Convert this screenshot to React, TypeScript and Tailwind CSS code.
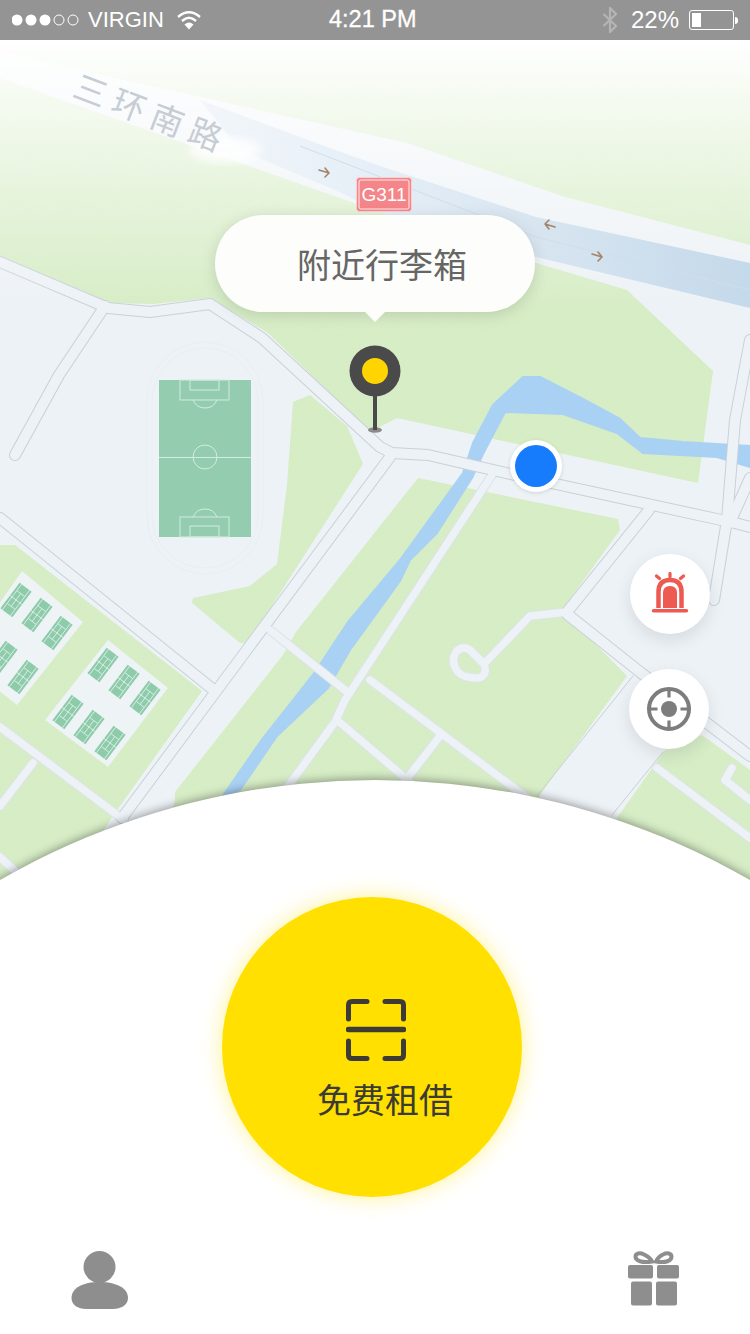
import React from "react";

const edgedRoads = [
  "0,262 108,308 150,312 210,304 262,338 380,447 392,453 428,455 510,474 735,523 750,527",
  "105,306 59,375 15,455",
  "390,457 122,818",
  "0,518 215,691",
  "649,510 567,612",
  "567,614 640,672 750,756",
  "750,340 735,420 727,520 714,600",
  "732,518 750,478",
];
const plainRoads = [
  "492,475 345,700 335,722 278,800",
  "270,630 346,691",
  "370,680 530,800",
  "337,720 410,782",
  "440,736 402,785",
  "0,727 124,820",
  "33,763 0,806",
  "0,857 30,885",
  "657,768 750,838",
  "732,768 725,780 750,800",
];
const courts = [
  [103, 665], [124, 682], [145, 698], [68, 712], [89, 727], [110, 743],
  [16, 600], [37, 615], [57, 633], [2, 658], [23, 677],
];

function MapArt() {
  return (
    <svg className="absolute left-0 top-0" width="750" height="860" viewBox="0 40 750 860">
      <defs>
        <linearGradient id="fade" x1="0" y1="0" x2="0" y2="1">
          <stop offset="0" stopColor="#fff" stopOpacity="1" />
          <stop offset="0.2" stopColor="#fff" stopOpacity="0.78" />
          <stop offset="0.55" stopColor="#fff" stopOpacity="0.42" />
          <stop offset="1" stopColor="#fff" stopOpacity="0" />
        </linearGradient>
        <linearGradient id="lane" x1="200" y1="0" x2="750" y2="0" gradientUnits="userSpaceOnUse">
          <stop offset="0" stopColor="#f2f6fa" />
          <stop offset="0.3" stopColor="#e6eff7" />
          <stop offset="0.65" stopColor="#d6e4f0" />
          <stop offset="1" stopColor="#c4d9ea" />
        </linearGradient>
        <filter id="grain" x="0" y="0" width="100%" height="100%">
          <feTurbulence type="fractalNoise" baseFrequency="0.55" numOctaves="2" seed="4" result="n" />
          <feColorMatrix in="n" type="matrix" values="0 0 0 0 0.66  0 0 0 0 0.82  0 0 0 0 0.56  0 0 0 0.9 -0.36" result="c" />
          <feComposite in="c" in2="SourceGraphic" operator="in" result="t" />
          <feMerge>
            <feMergeNode in="SourceGraphic" />
            <feMergeNode in="t" />
          </feMerge>
        </filter>
        <filter id="soft"><feGaussianBlur stdDeviation="4" /></filter>
      </defs>

      <rect x="0" y="40" width="750" height="860" fill="#edf2f6" />

      <g fill="#d7edc6" filter="url(#grain)">
        <polygon points="0,40 750,40 750,245 565,197 407,143 48,63 0,50" />
        <polygon points="0,78 354,203 526,260 627,290 713,371 698,483 397,418 370,432 268,333 210,298 153,304 110,303 0,257" />
        <polygon points="293,402 310,395 347,426 363,464 248,643 240,643 192,603 193,598 250,586 277,564 287,485" />
        <polygon points="418,478 618,519 620,530 562,610 627,676 540,795 520,900 150,900 175,800 175,792 283,655 296,632" />
        <polygon points="0,545 15,545 202,691 110,820 60,900 0,900" />
        <polygon points="665,750 702,735 750,770 750,900 600,900 617,818" />
      </g>

      <polygon
        points="222,797 263,738 315,672 348,622 400,560 463,473 473,443 493,405 523,377 540,377 583,399 620,419 640,438 683,442 750,446 750,467 717,457 643,453 617,433 563,414 505,412 483,454 472,478 437,533 410,560 400,581 350,650 328,688 277,736 240,790"
        fill="#a9d1f4"
        stroke="#a9d1f4"
        strokeWidth="2"
        strokeLinejoin="round"
      />

      <g fill="none" strokeLinejoin="round" strokeLinecap="round">
        {plainRoads.map((p) => <polyline key={p} points={p} stroke="#dde3e9" strokeWidth="9.500" />)}
        <path d="M567 612 L530 616 L484 664 L470 650 Q462 645 456 652 Q450 662 458 672 Q463 678 478 678 Q488 676 484 664" stroke="#dde3e9" strokeWidth="9.500" />
        {edgedRoads.map((p) => <polyline key={p} points={p} stroke="#c9d0d8" strokeWidth="12" />)}
        {plainRoads.map((p) => <polyline key={p} points={p} stroke="#edf2f6" strokeWidth="7.500" />)}
        <path d="M567 612 L530 616 L484 664 L470 650 Q462 645 456 652 Q450 662 458 672 Q463 678 478 678 Q488 676 484 664" stroke="#edf2f6" strokeWidth="7.500" />
        {edgedRoads.map((p) => <polyline key={p} points={p} stroke="#edf2f6" strokeWidth="10" />)}
        <polyline points="633,676 537,796" stroke="#c9d0d8" strokeWidth="1" />
        <polyline points="663,752 612,815" stroke="#c9d0d8" strokeWidth="1" />
      </g>

      <g fill="none" stroke="#e9eef2" strokeWidth="1">
        <rect x="147" y="342" width="116" height="232" rx="58" />
        <rect x="152" y="348" width="106" height="220" rx="53" />
      </g>
      <rect x="159" y="380" width="92" height="157" fill="#93ccae" />
      <g fill="none" stroke="#d4ecdf" strokeWidth="1">
        <line x1="159" y1="457.5" x2="251" y2="457.5" />
        <circle cx="205" cy="457" r="12" />
        <rect x="180" y="380" width="49" height="20" />
        <rect x="190" y="380" width="29" height="10" />
        <path d="M193 400 A13 13 0 0 0 217 400" />
        <rect x="180" y="517" width="49" height="20" />
        <rect x="190" y="526" width="29" height="11" />
        <path d="M193 517 A13 13 0 0 1 217 517" />
      </g>

      <polygon points="22,571 83,622 17,705 -40,660" fill="#eef3f6" />
      <polygon points="108,640 168,688 108,767 45,720" fill="#eef3f6" />
      {courts.map(([x, y]) => (
        <g key={`${x}-${y}`} transform={`translate(${x} ${y}) rotate(37)`}>
          <rect x="-7.500" y="-16" width="15" height="32" fill="#8ecbab" />
          <g stroke="#d8eee2" strokeWidth="0.9" fill="none">
            <line x1="-5" y1="-16" x2="-5" y2="16" />
            <line x1="5" y1="-16" x2="5" y2="16" />
            <line x1="-7.500" y1="0" x2="7.500" y2="0" />
            <line x1="-5" y1="-8" x2="5" y2="-8" />
            <line x1="-5" y1="8" x2="5" y2="8" />
            <line x1="0" y1="-8" x2="0" y2="8" />
          </g>
        </g>
      ))}

      <rect x="0" y="40" width="750" height="270" fill="url(#fade)" />

      <polygon points="200,100 335,150 383,167 536,217 750,263 750,308 536,257 383,213 335,190 240,150" fill="url(#lane)" />
      <polyline points="300,146 536,237 750,290" fill="none" stroke="#d0deea" strokeWidth="1" />

      <g fill="none" stroke="#a3846a" strokeWidth="1.600" strokeLinecap="round" strokeLinejoin="round">
        <path d="M319 170 L329 173 M325 168 L329 173 L325 177" />
        <path d="M555 227 L545 224 M549 220 L545 224 L549 229" />
        <path d="M592 254 L602 257 M598 252 L602 257 L598 261" />
      </g>

      <ellipse cx="225" cy="150" rx="36" ry="13" fill="#fff" opacity="0.8" filter="url(#soft)" />

      <text
        transform="translate(71 96) rotate(21)"
        fontSize="33"
        letterSpacing="8"
        fill="#c6cdd5"
        fontFamily="'Noto Sans CJK SC', sans-serif"
      >
        三环南路
      </text>

      <rect x="356.500" y="177.500" width="55" height="34" rx="3" fill="#f48589" stroke="#fbd0d1" strokeWidth="1" />
      <rect x="359" y="180" width="50" height="29" rx="2" fill="none" stroke="#fff" strokeWidth="1" opacity="0.85" />
      <text x="384" y="201" textAnchor="middle" fontSize="19" fill="#fff" fontFamily="'Liberation Sans', sans-serif">G311</text>
    </svg>
  );
}

function Wifi() {
  return (
    <svg width="24" height="20" viewBox="0 0 24 20" className="ml-[13px]" fill="none" stroke="#fff" strokeWidth="2.400">
      <path d="M1 7 Q12 -2.500 23 7" />
      <path d="M5 11 Q12 4.500 19 11" />
      <path d="M12 19.500 L7.500 14.500 Q12 10.500 16.500 14.500 Z" fill="#fff" stroke="none" />
    </svg>
  );
}

function StatusBar() {
  return (
    <div className="flex h-10 shrink-0 items-center bg-[#949494] text-white [font-family:'Liberation_Sans',sans-serif]">
      <div className="flex w-[329px] items-center pl-[12px]">
        <svg width="74" height="14" viewBox="0 0 74 14">
          <circle cx="5" cy="7" r="5.500" fill="#fff" />
          <circle cx="19" cy="7" r="5.500" fill="#fff" />
          <circle cx="33" cy="7" r="5.500" fill="#fff" />
          <circle cx="47" cy="7" r="5" fill="none" stroke="#fff" />
          <circle cx="61" cy="7" r="5" fill="none" stroke="#fff" />
        </svg>
        <span className="ml-[2px] text-[22px] leading-none">VIRGIN</span>
        <Wifi />
      </div>
      <span className="text-[23.500px] leading-none [-webkit-text-stroke:0.3px_#fff]">4:21 PM</span>
      <div className="flex flex-1 items-center justify-end pr-[12px]">
        <svg width="16" height="26" viewBox="0 0 16 26" fill="none" stroke="#b4b4b4" strokeWidth="2.200">
          <path d="M1.500 7 L14 19 L8 25 V1 L14 7 L1.500 19" />
        </svg>
        <span className="ml-[13px] text-[24px] leading-none">22%</span>
        <div className="ml-[10px] flex h-[20px] w-[45px] items-center rounded-[3px] border border-white px-[2px]">
          <div className="h-[14px] w-[9px] bg-white" />
        </div>
        <div className="ml-[1px] h-[7px] w-[3px] rounded-r-full bg-white" />
      </div>
    </div>
  );
}

function AlarmIcon() {
  return (
    <svg width="40" height="44" viewBox="0 0 40 44">
      <g stroke="#ee5a52" fill="none" strokeLinecap="round">
        <path d="M8.500 36 V20 Q8.500 8 20 8 Q31.500 8 31.500 20 V36" strokeWidth="4.500" strokeLinecap="butt" />
        <path d="M20 1.500 V5 M6.500 4 L9.500 6.500 M33.500 4 L30.500 6.500" strokeWidth="3.200" />
        <path d="M3.500 38.800 H36.500" strokeWidth="3.400" />
      </g>
      <path d="M13 36 V21 Q13 14 20 14 Q27 14 27 21 V36 Z" fill="#ee5a52" />
    </svg>
  );
}

function TargetIcon() {
  return (
    <svg width="46" height="46" viewBox="0 0 46 46" fill="none" stroke="#7d7d7d">
      <circle cx="23" cy="23" r="20" strokeWidth="4" />
      <circle cx="23" cy="23" r="8" fill="#7d7d7d" stroke="none" />
      <path d="M23 3 V11.500 M23 34.500 V43 M3 23 H11.500 M34.500 23 H43" strokeWidth="3.200" />
    </svg>
  );
}

function ScanIcon() {
  return (
    <svg width="60" height="62" viewBox="0 0 60 62" fill="none" stroke="#3d3b35" strokeWidth="5" strokeLinecap="round" strokeLinejoin="round">
      <path d="M2.500 20 V6 Q2.500 2.500 6 2.500 H21" />
      <path d="M39 2.500 H54 Q57.500 2.500 57.500 6 V20" />
      <path d="M2.500 42 V56 Q2.500 59.500 6 59.500 H21" />
      <path d="M39 59.500 H54 Q57.500 59.500 57.500 56 V42" />
      <path d="M2.500 30.500 H57.500" strokeWidth="5.500" />
    </svg>
  );
}

function UserIcon() {
  return (
    <svg width="58" height="58" viewBox="0 0 58 58" fill="#8e8e8e">
      <circle cx="28.500" cy="16" r="16" />
      <path d="M0.500 47 C0.500 37 12 31 28.500 31 C45 31 57 37 57 47 C57 54 50 58 42 58 H15 C7 58 0.500 54 0.500 47 Z" />
    </svg>
  );
}

function GiftIcon() {
  return (
    <svg width="54" height="56" viewBox="0 0 54 56" fill="#8e8e8e">
      <rect x="2" y="14" width="25" height="13.500" rx="2" />
      <rect x="31" y="14" width="22" height="13.500" rx="2" />
      <rect x="5" y="30.500" width="21" height="24" rx="2" />
      <rect x="30" y="30.500" width="21" height="24" rx="2" />
      <g fill="none" stroke="#8e8e8e" strokeWidth="4">
        <path d="M26 10.500 C16 12 9.500 10 9.500 5.500 C9.500 2 14 1.500 18 3.500 C22 5.500 25 8 26 10.500 Z" />
        <path d="M30 10.500 C40 12 45.500 10 45.500 5.500 C45.500 2 41 1.500 37 3.500 C33 5.500 31 8 30 10.500 Z" />
      </g>
    </svg>
  );
}

export default function App() {
  return (
    <div className="relative flex h-[1334px] w-[750px] flex-col overflow-hidden bg-white [font-family:'Liberation_Sans','Noto_Sans_CJK_SC',sans-serif]">
      <StatusBar />

      <div className="relative h-[740px] shrink-0">
        <MapArt />

        <div className="absolute left-[215px] top-[175px] flex h-[97px] w-[320px] items-center justify-center rounded-[48px] bg-[#fdfdfb] pl-[14px] pt-[4px] shadow-[0_3px_14px_rgba(90,100,80,0.22)]">
          <span className="text-[34px] leading-none text-[#666666]">附近行李箱</span>
          <svg className="absolute left-[149px] top-[96px]" width="22" height="11" viewBox="0 0 22 11">
            <path d="M0 0 H22 L11 11 Z" fill="#fdfdfb" />
          </svg>
        </div>

        <svg className="absolute left-[347px] top-[305px]" width="56" height="90" viewBox="0 0 56 90">
          <ellipse cx="28" cy="85" rx="7" ry="2.800" fill="#8b8b8b" />
          <rect x="26" y="40" width="4" height="45" fill="#4a4a4a" />
          <circle cx="28" cy="26" r="25.500" fill="#4a4a4a" />
          <circle cx="28" cy="26" r="13" fill="#ffd400" />
        </svg>

        <div className="absolute left-[510px] top-[400px] flex h-[52px] w-[52px] items-center justify-center rounded-full bg-white shadow-[0_1px_4px_rgba(0,0,0,0.12)]">
          <div className="h-[42px] w-[42px] rounded-full bg-[#177cfc]" />
        </div>

        <div className="absolute left-[630px] top-[514px] flex h-[80px] w-[80px] items-center justify-center rounded-full bg-white shadow-[0_6px_16px_rgba(70,80,90,0.14)]">
          <AlarmIcon />
        </div>
        <div className="absolute left-[629px] top-[629px] flex h-[80px] w-[80px] items-center justify-center rounded-full bg-white shadow-[0_6px_16px_rgba(70,80,90,0.14)]">
          <TargetIcon />
        </div>
      </div>

      <div className="relative flex flex-1 flex-col">
        <div className="absolute left-[-378px] top-0 h-[1506px] w-[1506px] rounded-full bg-white shadow-[0_-2px_9px_rgba(0,0,0,0.34)]" />

        <div className="relative ml-[222px] mt-[117px] flex h-[300px] w-[300px] flex-col items-center rounded-full bg-[#ffe000] pt-[102px] shadow-[0_0_22px_rgba(255,224,0,0.42)]">
          <div className="ml-[7px]">
            <ScanIcon />
          </div>
          <span className="ml-[26px] mt-[21px] text-[34px] leading-[38px] text-[#3b3a33]">免费租借</span>
        </div>

        <div className="relative mt-[54px] flex items-start justify-between pl-[71px] pr-[70px]">
          <UserIcon />
          <GiftIcon />
        </div>
      </div>
    </div>
  );
}
